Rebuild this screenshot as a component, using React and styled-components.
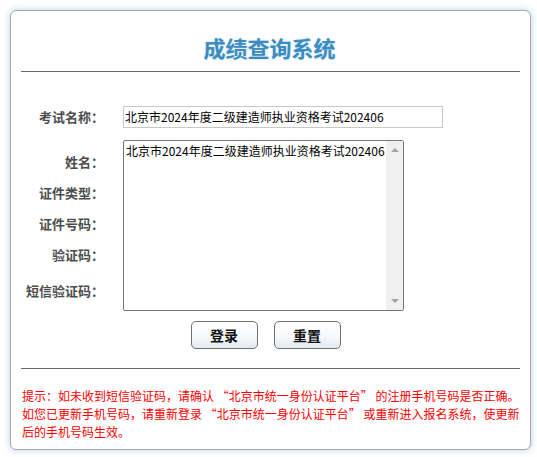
import React from "react"
import styled, { createGlobalStyle } from "styled-components"

const GlobalStyle = createGlobalStyle`
    html, body {
        margin: 0;
        padding: 0;
        background: #ffffff;
    }
    body {
        font-family: "Noto Sans CJK SC", "Noto Sans", sans-serif;
    }
`

const Page = styled.div`
    padding: 10px 6px 7px 10px;
`

const Card = styled.section`
    box-sizing: border-box;
    width: 521px;
    height: 440px;
    border: 1px solid #a9a9a9;
    border-radius: 6px;
    background: #fff;
    box-shadow: 0 0 7px rgba(120, 175, 225, 0.55);
    padding: 0 10px;
`

const Title = styled.h1`
    margin: 0;
    padding-top: 21px;
    height: 30px;
    line-height: 30px;
    text-align: center;
    font-size: 22px;
    font-weight: 700;
    color: #3b8dc1;
    text-shadow: 0 0 2px rgba(120, 180, 220, 0.5);
    padding-right: 2px;
`

const Divider = styled.hr`
    margin: ${(p) => p.$top}px 0 0;
    border: 0;
    height: 1px;
    background: #6b6b6b;
`

const Form = styled.div`
    display: grid;
    grid-template-columns: 81px 1fr;
    column-gap: 21px;
    row-gap: 12px;
    margin-top: 34px;
`

const Label = styled.div`
    text-align: right;
    font-size: 13px;
    font-weight: 700;
    color: #4d4d4d;
    line-height: ${(p) => p.$h || 31}px;
    margin-top: ${(p) => p.$extra || 0}px;
    margin-right: -2px;
    white-space: nowrap;
`

const LabelStack = styled.div`
    display: flex;
    flex-direction: column;
    padding-top: 6px;
`

const TextInput = styled.div`
    box-sizing: border-box;
    width: 320px;
    height: 22px;
    border: 1px solid #c8c8c8;
    padding: 0 1px;
    font-size: 12px;
    line-height: 20px;
    color: #000;
    white-space: nowrap;
    overflow: hidden;
`

const ListBox = styled.div`
    box-sizing: border-box;
    width: 281px;
    height: 171px;
    border: 1px solid #767676;
    border-radius: 2px;
    display: flex;
`

const ListText = styled.div`
    flex: 1;
    padding: 1px 2px;
    font-size: 12px;
    line-height: 18px;
    color: #000;
    white-space: nowrap;
    overflow: hidden;
`

const ScrollTrack = styled.div`
    width: 17px;
    background: #f0f0f0;
    display: flex;
    flex-direction: column;
    justify-content: space-between;
    align-items: center;
    padding: 7px 0;
`

const Arrow = styled.span`
    width: 0;
    height: 0;
    border-left: 4px solid transparent;
    border-right: 4px solid transparent;
    ${(p) =>
        p.$down
            ? "border-top: 4px solid #a3a3a3;"
            : "border-bottom: 4px solid #a3a3a3;"}
`

const ButtonRow = styled.div`
    display: flex;
    justify-content: center;
    gap: 16px;
    margin-top: 10px;
    padding-right: 10px;
`

const Button = styled.button`
    box-sizing: border-box;
    width: 67px;
    height: 28px;
    border: 1px solid #6f6f6f;
    border-radius: 5px;
    background: linear-gradient(#ffffff 0%, #f7f9fb 55%, #e2e9f0 100%);
    font-family: "Noto Sans CJK SC", sans-serif;
    font-size: 14px;
    font-weight: 700;
    color: #111;
    padding: 0;
    cursor: pointer;
`

const Notice = styled.p`
    margin: 18px 0 0;
    padding-left: 1px;
    font-size: 12px;
    line-height: 18px;
    color: #ff0000;
`

const examName = "北京市2024年度二级建造师执业资格考试202406"

export default function App() {
    return (
        <>
            <GlobalStyle />
            <Page>
                <Card>
                    <Title>成绩查询系统</Title>
                    <Divider $top={9} />
                    <Form>
                        <Label $h={22}>考试名称：</Label>
                        <TextInput>{examName}</TextInput>
                        <LabelStack>
                            <Label>姓名：</Label>
                            <Label>证件类型：</Label>
                            <Label>证件号码：</Label>
                            <Label>验证码：</Label>
                            <Label $extra={5}>短信验证码：</Label>
                        </LabelStack>
                        <ListBox>
                            <ListText>{examName}</ListText>
                            <ScrollTrack>
                                <Arrow />
                                <Arrow $down />
                            </ScrollTrack>
                        </ListBox>
                    </Form>
                    <ButtonRow>
                        <Button>登录</Button>
                        <Button>重置</Button>
                    </ButtonRow>
                    <Divider $top={19} />
                    <Notice>
                        提示：如未收到短信验证码，请确认 “北京市统一身份认证平台” 的注册手机号码是否正确。如您已更新手机号码，请重新登录 “北京市统一身份认证平台” 或重新进入报名系统，使更新后的手机号码生效。
                    </Notice>
                </Card>
            </Page>
        </>
    )
}
